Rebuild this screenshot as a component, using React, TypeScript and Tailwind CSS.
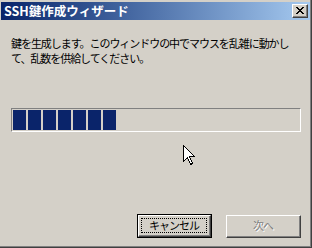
import React from "react";

const jp = "font-['Noto_Sans_CJK_JP',sans-serif]";

function CloseButton() {
  return (
    <div className="mr-[2px] w-[16px] h-[14px] border border-t-white border-l-white border-r-[#404040] border-b-[#404040] bg-[#D4D0C8]">
      <div className="w-full h-full border-r border-b border-[#808080] flex items-center justify-center">
        <svg width="8" height="7" viewBox="0 0 8 7" shapeRendering="crispEdges">
          <path
            d="M0 0h2v1h-2zM6 0h2v1h-2zM1 1h2v1h-2zM5 1h2v1h-2zM2 2h4v1h-4zM3 3h2v1h-2zM2 4h4v1h-4zM1 5h2v1h-2zM5 5h2v1h-2zM0 6h2v1h-2zM6 6h2v1h-2z"
            fill="#000"
          />
        </svg>
      </div>
    </div>
  );
}

function Cursor() {
  return (
    <svg
      className="absolute left-[183px] top-[145px]"
      width="13"
      height="21"
      viewBox="0 0 13 21"
      shapeRendering="crispEdges"
    >
      <path
        d="M0.5 0.5 L0.5 16.5 L4.5 12.5 L7.5 19.5 L9.5 18.5 L6.5 11.5 L11.5 11.5 Z"
        fill="#fff"
        stroke="#000"
        strokeWidth="1"
      />
    </svg>
  );
}

export default function App() {
  const blocks = [0, 1, 2, 3, 4, 5, 6];

  return (
    <div className={`relative w-[312px] h-[248px] bg-[#D4D0C8] border-r border-b border-[#404040] ${jp}`}>
      <div className="w-full h-full border-r border-b border-[#808080] pt-[2px] pl-[1px] flex flex-col">
        {/* title bar */}
        <div className="h-[18px] flex items-center justify-between bg-gradient-to-r from-[#0A246A] to-[#A6CAF0]">
          <span className="pl-[3px] text-white text-[12.5px] font-bold leading-none">
            SSH鍵作成ウィザード
          </span>
          <CloseButton />
        </div>

        {/* body */}
        <div className="flex-1 flex flex-col pl-[10px] pr-[9px]">
          <p className="mt-[16px] text-[11px] leading-[15px] tracking-[-1.05px] text-black">
            鍵を生成します。このウィンドウの中でマウスを乱雑に動かし
            <br />
            て、乱数を供給してください。
          </p>

          <div className="mt-[42px] h-[24px] border border-t-[#808080] border-l-[#808080] border-r-white border-b-white p-[1px] flex gap-[2px]">
            {blocks.map((b) => (
              <div key={b} className="w-[13px] h-full bg-[#0A246A]" />
            ))}
          </div>

          <div className="mt-auto mb-[8px] flex justify-end items-center gap-[14px]">
            <button className="w-[75px] h-[24px] border border-black bg-[#D4D0C8]">
              <div className="w-full h-full border border-t-white border-l-white border-r-[#404040] border-b-[#404040]">
                <div className="w-full h-full border-r border-b border-[#808080] p-[2px]">
                  <div className="w-full h-full border border-dotted border-black flex items-center justify-center text-[11px] tracking-[-1px] text-black leading-none">
                    キャンセル
                  </div>
                </div>
              </div>
            </button>
            <button className="w-[75px] h-[23px] border border-t-white border-l-white border-r-[#404040] border-b-[#404040] bg-[#D4D0C8]">
              <div className="w-full h-full border-r border-b border-[#808080] flex items-center justify-center text-[11px] tracking-[-1px] text-[#808080] leading-none [text-shadow:1px_1px_0_#fff]">
                次へ
              </div>
            </button>
          </div>
        </div>
      </div>
      <Cursor />
    </div>
  );
}
